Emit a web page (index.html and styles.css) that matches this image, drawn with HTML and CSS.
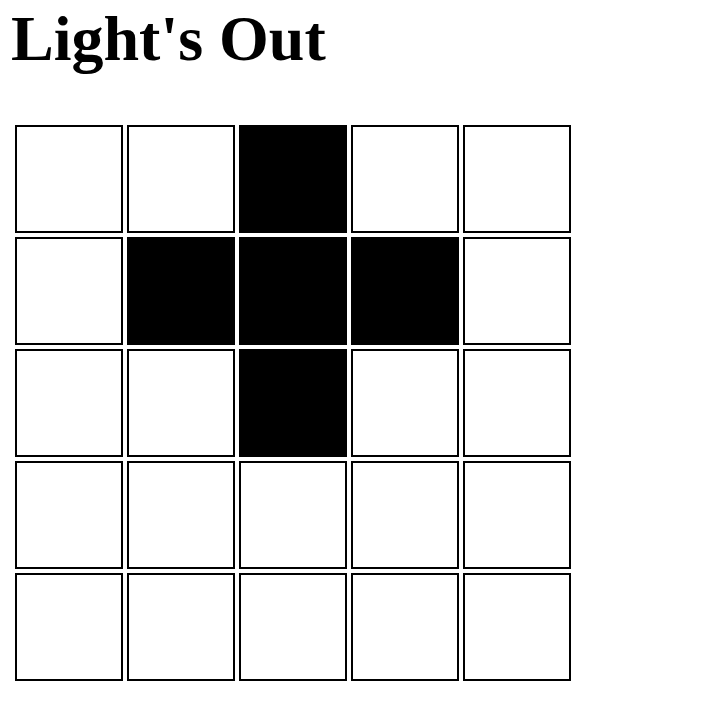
FILE: index.html
```html
<!DOCTYPE html>
<html lang="en">
<head>
    <meta charset="UTF-8">
    <meta name="viewport" content="width=device-width, initial-scale=1.0">
    <title>Light's Out</title>
    <link rel="stylesheet" href="styles.css">
</head>
<body>
    <h1 class="title">Light's Out</h1>

    <div class="board">
        <div class="cell"></div>
        <div class="cell"></div>
        <div class="cell on"></div>
        <div class="cell"></div>
        <div class="cell"></div>

        <div class="cell"></div>
        <div class="cell on"></div>
        <div class="cell on"></div>
        <div class="cell on"></div>
        <div class="cell"></div>

        <div class="cell"></div>
        <div class="cell"></div>
        <div class="cell on"></div>
        <div class="cell"></div>
        <div class="cell"></div>

        <div class="cell"></div>
        <div class="cell"></div>
        <div class="cell"></div>
        <div class="cell"></div>
        <div class="cell"></div>

        <div class="cell"></div>
        <div class="cell"></div>
        <div class="cell"></div>
        <div class="cell"></div>
        <div class="cell"></div>
    </div>
</body>
</html>
```

FILE: styles.css
```css
body {
    margin: 0;
    padding: 0;
    background: #fff;
    color: #000;
    font-family: "Liberation Serif", "Times New Roman", serif;
}

.title {
    font-size: 64px;
    font-weight: bold;
    line-height: 74px;
    margin: 0;
    padding: 2px 0 0 11px;
}

.board {
    display: grid;
    grid-template-columns: repeat(5, 108px);
    grid-auto-rows: 108px;
    gap: 4px;
    margin-top: 49px;
    margin-left: 15px;
}

.cell {
    box-sizing: border-box;
    border: 2px solid #000;
    background: #fff;
    cursor: pointer;
}

.cell.on {
    background: #000;
}
```
